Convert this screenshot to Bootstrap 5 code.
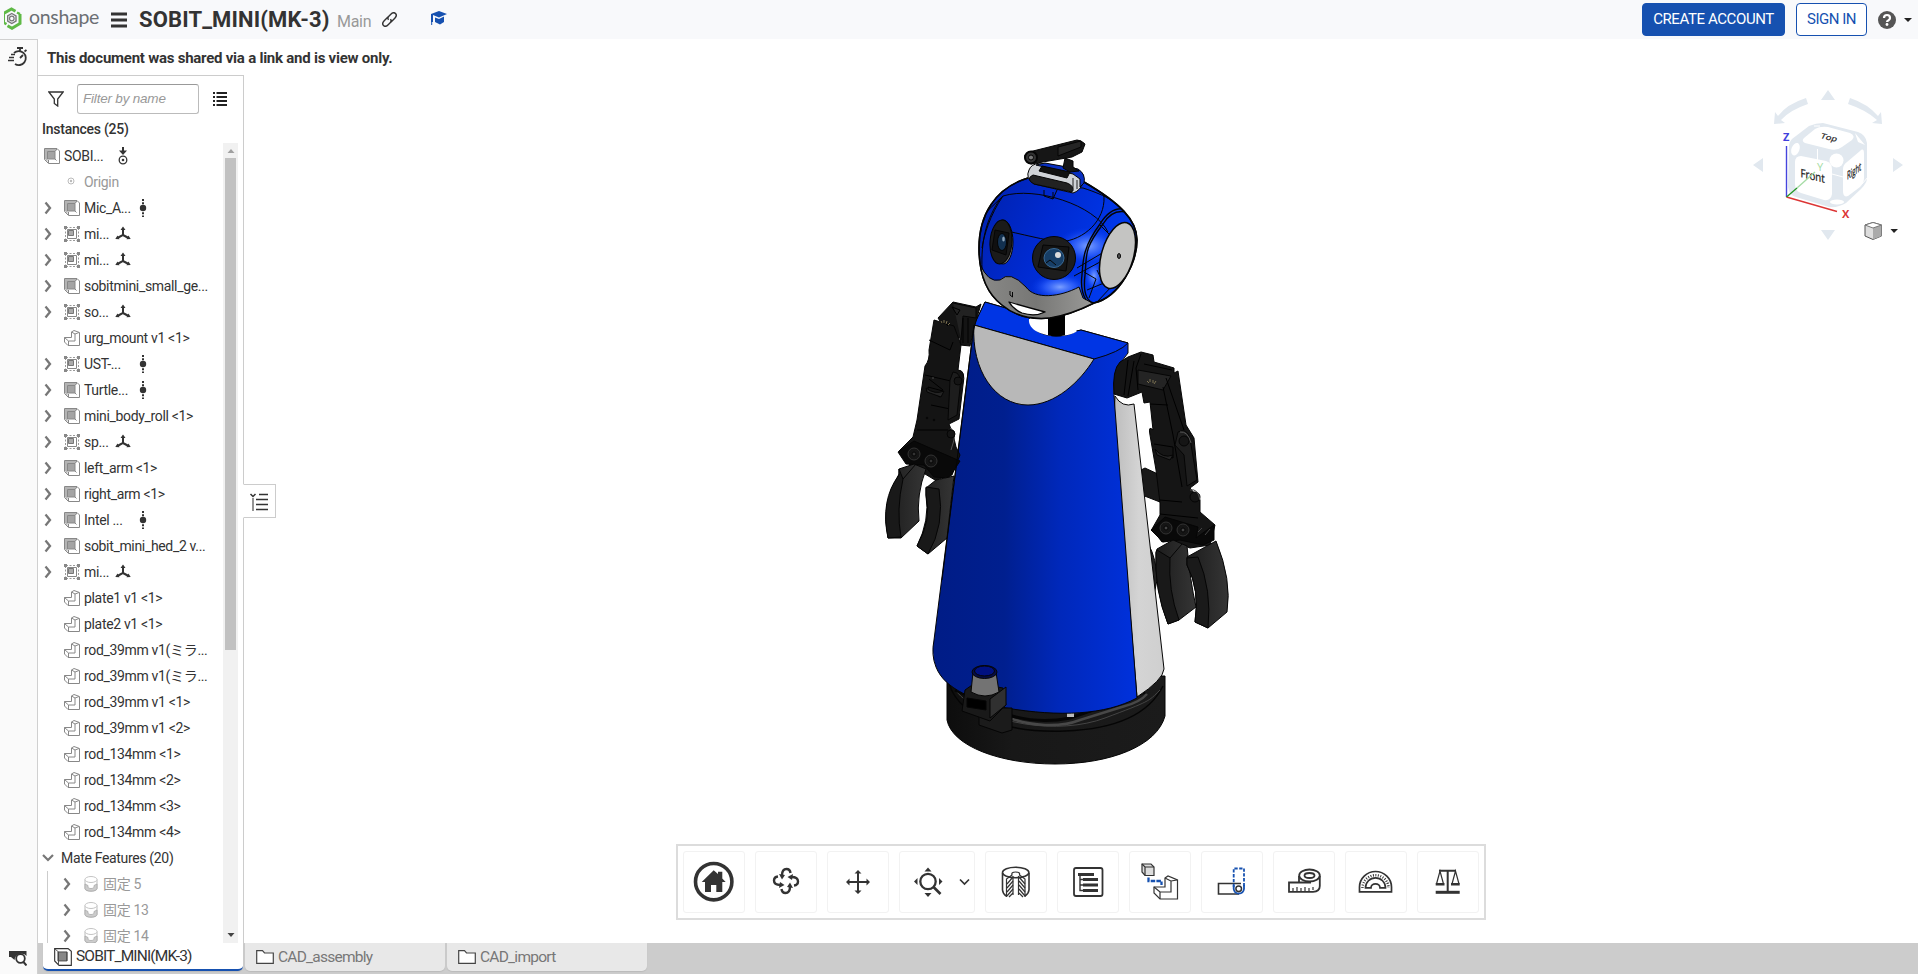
<!DOCTYPE html>
<html lang="en">
<head>
<meta charset="utf-8">
<title>SOBIT_MINI(MK-3)</title>
<link href="https://cdn.jsdelivr.net/npm/bootstrap@5.3.0/dist/css/bootstrap.min.css" rel="stylesheet">
<style>
body{font-family:Roboto,"Noto Sans CJK JP",sans-serif;color:#333;background:#fff;font-size:14px;line-height:1.3}
svg{flex:none;display:block}
.topbar{height:39px;background:#f8f9fb}
.brand-word{font-family:Lato,sans-serif;font-size:19.5px;color:#6b6f73;margin-left:5px;width:72px;line-height:20px;margin-top:-5px;letter-spacing:-.3px}
.doc-title{font-size:22px;font-weight:700;margin-left:12px;width:198px;line-height:26px;letter-spacing:.13px}
.doc-branch{font-size:16px;color:#999;width:45px;padding-top:6px;letter-spacing:-.3px}
.btn-os{height:33px;border-radius:4px;font-size:15px;line-height:31px;padding:0;border:1px solid #1651b0}
.btn-create,.btn-create:hover{width:143px;background:#1651b0;color:#fff;letter-spacing:-.4px}
.btn-signin{width:71px;background:#fff;color:#1651b0;letter-spacing:-.5px}
.rail{width:38px;background:#fafafa;border-right:1px solid #d0d0d0;border-top:1px solid #d0d0d0}
.notice{height:36px;padding:3px 0 0 9px;font-weight:700;font-size:15px;letter-spacing:-.24px}
.side-panel{width:206px;border-top:1px solid #ccc;border-right:1px solid #ccc}
.filter-row{height:44px;padding:7px 15px 6px 10px}
.filter-box{width:122px;height:30px;border:1px solid #bbb;border-top-color:#999;border-radius:3px;font:italic 13.500px "Liberation Sans",sans-serif;padding:0 5px;margin-left:13px;margin-right:14px;letter-spacing:-.2px;color:#333}
.filter-box::placeholder{color:#999;opacity:1}
.inst-head{height:23px;font-size:14px;font-weight:500;padding:0 0 0 4px;letter-spacing:-.25px}
.tree{height:800px}
.tree-row{height:26px;letter-spacing:-.33px;white-space:nowrap}
.tree-row .chev{margin-left:6px;width:8px}
.tree-row .ico{width:16px;margin-left:12px;margin-right:4px}
.w51{width:51px}.w31{width:31px}
.muted-os{color:#999}
.mates{border-left:1px solid #ccc;margin-left:9px}
.sbar{width:15px;background:#f1f1f1;margin-right:5px}
.thumb{height:492px;width:11px;background:#c1c1c1}
.tabbar{height:31px;background:#ccc;padding-left:5px}
.doc-tab{height:28px;width:200px;background:#e8e8e8;color:#777;font-size:15.500px;border-radius:0 0 5px 5px;letter-spacing:-.75px;padding-left:11px;margin-right:2px;box-shadow:0 1px 1px #bbb;white-space:nowrap}
.doc-tab.on{background:#fff;color:#333;border-bottom:2px solid #1651b0;letter-spacing:-.85px;padding-top:1px}
.canvas-area{height:868px}
.panel-toggle{left:-1px;top:409px;width:33px;height:34px;border:1px solid #ccc;border-left-color:#fff;background:#fff}
.robot{left:626px;top:55px}
.cube{left:1506px;top:10px}
.tools{left:432px;top:769px;width:810px;height:76px;border:2px solid #dcdcdc;background:#fff;padding:5px;gap:10px}
.tool{width:62px;height:62px;border:1px solid #f2f2f2;border-radius:3px;background:#fff;padding:0}
.tool svg{margin:-1px}
.tool.wide{width:76px}
</style>
</head>
<body class="overflow-hidden vh-100 d-flex flex-column">
<svg width="0" height="0" class="position-absolute">
<defs>
<symbol id="i-chev" viewBox="0 0 8 14"><path d="M1.500 1.500L6 7L1.500 12.500" fill="none" stroke="#777" stroke-width="2.300"/></symbol>
<symbol id="i-asm" viewBox="0 0 16 16"><path d="M.5.5H13L15.500 3V15.500H4.500L.5 11.500Z" fill="#fff" stroke="#888"/><path d="M1 1H13L11 3.500H3.500V14L1 11Z" fill="#b4b4b4"/><path d="M3.500 3.500H11V11H3.500Z" fill="#a4a4a4" stroke="#888"/><path d="M4.500 12V15M11 3.500L13 1M11 11L12.500 12.500" stroke="#888"/></symbol>
<symbol id="i-grp" viewBox="0 0 16 16"><path d="M2 1.500H14M2 14.500H14M1.500 2V14M14.500 2V14" stroke="#999" stroke-dasharray="2 1.500"/><path d="M0 0h3v3H0zM13 0h3v3h-3zM0 13h3v3H0zM13 13h3v3h-3z" fill="#888"/><path d="M3.500 3.500h9v9h-9z" fill="#fff" stroke="#888"/><path d="M4.500 4.500h5v5h-5z" fill="#aaa" stroke="#777"/></symbol>
<symbol id="i-part" viewBox="0 0 16 16"><path d="M7.500 2L10 .5L15.500 2.500V15.500H4L.5 12V7.500H7.500Z" fill="#fff" stroke="#888"/><path d="M7.500 2L11 4V11H4.500L.5 7.500M4.500 11V15M11 4L15 2.500" fill="none" stroke="#888"/></symbol>
<symbol id="i-dot" viewBox="0 0 16 18"><path d="M8 0V18" stroke="#333" stroke-width="2" stroke-dasharray="2 1.300"/><circle cx="8" cy="9" r="3.200" fill="#333"/></symbol>
<symbol id="i-tri" viewBox="0 0 16 16"><path d="M8 3V9L2.500 12M8 9L13.500 12" fill="none" stroke="#333" stroke-width="2"/><path d="M5.500 4L8 .5L10.500 4ZM.3 13L2.500 9.500L4.500 13.300ZM15.700 13L13.500 9.500L11.500 13.300Z" fill="#333"/></symbol>
<symbol id="i-mate" viewBox="0 0 14 16"><path d="M1 3.500V12.500C1 16 13 16 13 12.500V3.500" fill="#fff" stroke="#bbb"/><path d="M1 8L4 9.500V11C4 13 10 13 10 11V9.500L13 8V12.500C13 16 1 16 1 12.500Z" fill="#ccc" stroke="#aaa" stroke-width=".8"/><ellipse cx="7" cy="3.500" rx="6" ry="3" fill="#fff" stroke="#c4c4c4"/></symbol>
<symbol id="i-folder" viewBox="0 0 18 14"><path d="M.7 13.300V.7H6.500L8.500 3H17.300V13.300Z" fill="#fff" stroke="#444" stroke-width="1.200"/></symbol>
<linearGradient id="gb"><stop offset="0" stop-color="#001c86"/><stop offset=".35" stop-color="#001f8f"/><stop offset=".62" stop-color="#0028ba"/><stop offset="1" stop-color="#0031dc"/></linearGradient>
<linearGradient id="gh" x1="0" x2="1" y1=".2" y2=".6"><stop offset="0" stop-color="#0022b0"/><stop offset=".4" stop-color="#002ad0"/><stop offset="1" stop-color="#003df5"/></linearGradient>
<radialGradient id="gl"><stop offset="0" stop-color="#7ba0ff"/><stop offset=".5" stop-color="#3566ff" stop-opacity=".7"/><stop offset="1" stop-color="#0035ee" stop-opacity="0"/></radialGradient>
<linearGradient id="gc" x1="0" x2="1"><stop offset="0" stop-color="#8a8a88"/><stop offset=".5" stop-color="#777775"/><stop offset="1" stop-color="#9a9a98"/></linearGradient>
<linearGradient id="gw"><stop offset="0" stop-color="#bdbdbd"/><stop offset=".5" stop-color="#d4d4d4"/><stop offset="1" stop-color="#cfcfcf"/></linearGradient>
<linearGradient id="gk"><stop offset="0" stop-color="#0d0d0d"/><stop offset=".3" stop-color="#181818"/><stop offset="1" stop-color="#1b1b1b"/></linearGradient>
<linearGradient id="gf"><stop offset="0" stop-color="#1c1c1c"/><stop offset="1" stop-color="#353535"/></linearGradient>
<clipPath id="head-clip"><path d="M1028 178C995 188 979 215 979 248C979 270 985 292 1002 305C1015 316 1030 320 1050 318Q1070 315 1094 303C1120 297 1137 262 1137 240C1137 220 1120 203 1084 182Z"/></clipPath>
</defs></svg>

<header class="topbar d-flex align-items-center position-relative">
  <svg width="20" height="23" viewBox="0 0 20 23" class="ms-1" style="margin-top:-2px"><g transform="translate(-2.500 .5)" fill="none"><path d="M2 15V6L10 1.500L14 3.700M18.500 6.500V16L10.500 20.800L6 18.300" stroke="#5fb946" stroke-width="3"/><path d="M2 15L5 16.700M18.500 6.500L15.500 5" stroke="#5fb946" stroke-width="2.500"/><path d="M10.300 6L14.500 8.300V13.500L10.300 16L6.200 13.500V8.300Z" stroke="#777" stroke-width="1.400"/><circle cx="10.300" cy="11" r="2.300" stroke="#777" stroke-width="1.200"/></g></svg>
  <span class="brand-word">onshape</span>
  <svg width="16" height="16" viewBox="0 0 16 16" style="margin-left:10px"><path d="M0 2H16M0 8H16M0 14H16" stroke="#333" stroke-width="3"/></svg>
  <span class="doc-title text-nowrap">SOBIT_MINI(MK-3)</span>
  <span class="doc-branch">Main</span>
  <svg width="15" height="15" viewBox="0 0 16 16"><g fill="none" stroke="#333" stroke-width="1.500" transform="rotate(-45 8 8)"><path d="M9 5H3Q-1 5 -1 8T3 11H6Q8.500 11 9 8.500M7 11H13Q17 11 17 8T13 5H10Q7.500 5 7 7.500"/></g></svg>
  <svg width="16" height="15" viewBox="0 0 16 15" style="margin-left:34px;margin-top:-2px"><path d="M8 0L16 3L8 6.500L2 4V11H0V3Z" fill="#1651b0"/><path d="M4 6.500L8 8L13 5.500V11L9 13.500L4 11Z" fill="#1651b0"/><path d="M.7 10v4" stroke="#1651b0"/></svg>
  <div class="d-flex align-items-center ms-auto h-100">
    <button class="btn btn-os btn-create">CREATE ACCOUNT</button>
    <button class="btn btn-os btn-signin" style="margin-left:11px">SIGN IN</button>
    <svg width="18" height="18" viewBox="0 0 18 18" style="margin-left:11px;margin-top:1px"><circle cx="9" cy="9" r="9" fill="#555"/><path d="M6 7Q6 4 9 4T12 7Q12 8.300 10.500 9.200Q9 10 9 11" fill="none" stroke="#fff" stroke-width="2.200"/><circle cx="9" cy="13.500" r="1.400" fill="#fff"/></svg>
    <svg width="8" height="4" viewBox="0 0 8 4" style="margin:1px 6px 0 8px"><path d="M0 0H8L4 4Z" fill="#222"/></svg>
  </div>
</header>

<div class="d-flex flex-grow-1">
  <aside class="rail d-flex flex-column justify-content-between align-items-center">
    <svg width="20" height="20" viewBox="0 0 20 20" style="margin:7px 2px 0 0"><g fill="none" stroke="#333" stroke-width="1.800"><path d="M6 6A7 7 0 1 1 7 17M9 1H15M12 1V4M16.500 4.500L18.500 3M12 11L15 8"/><path d="M3 7.500H7M1 10.500H6M0 13.500H6" stroke-width="1.500"/></g></svg>
    <svg width="18" height="15" viewBox="0 0 18 15" style="margin:0 2px 8px 0"><path d="M0 0H17.500V5Q15 2 11 3Q6 4 5.500 9L2 6H0Z" fill="#333"/><circle cx="11.500" cy="7.500" r="4.300" fill="#fff" stroke="#333" stroke-width="1.800"/><path d="M14.500 11L17.500 14.500" stroke="#333" stroke-width="2"/></svg>
  </aside>
  <div class="d-flex flex-column flex-grow-1">
    <div class="notice d-flex align-items-center">This document was shared via a link and is view only.</div>
    <div class="d-flex">
      <section class="side-panel flex-shrink-0">
        <div class="filter-row d-flex align-items-center">
          <svg width="16" height="16" viewBox="0 0 16 16"><path d="M.8 1H15.200L9.700 8V15L6.300 12.500V8Z" fill="none" stroke="#333" stroke-width="1.300"/></svg>
          <input class="filter-box" placeholder="Filter by name">
          <svg width="14" height="14" viewBox="0 0 14 14"><path d="M0 1H2M3.500 1H14M0 5H2M3.500 5H14M0 9H2M3.500 9H14M0 13H2M3.500 13H14" stroke="#222" stroke-width="2"/></svg>
        </div>
        <div class="inst-head">Instances (25)</div>
        <div class="tree d-flex">
          <div class="flex-grow-1 overflow-hidden" id="rows">
            <div class="tree-row d-flex align-items-center"><svg class="ico" height="16" style="margin-left:6px"><use href="#i-asm"/></svg><span class="w51">SOBI...</span><svg width="16" height="18" viewBox="0 0 16 18"><path d="M8 0V4" stroke="#333" stroke-width="2"/><path d="M4 3.500H12L8 8Z" fill="#333"/><circle cx="8" cy="13" r="3.800" fill="#fff" stroke="#333" stroke-width="1.300"/><circle cx="8" cy="13" r="1.300" fill="#333"/></svg></div>
            <div class="tree-row d-flex align-items-center muted-os"><svg width="8" height="8" viewBox="0 0 8 8" style="margin:-2px 9px 0 29px"><circle cx="4" cy="4" r="3" fill="none" stroke="#bbb"/><circle cx="4" cy="4" r="1.200" fill="#bbb"/></svg>Origin</div>
          </div>
          <div class="sbar d-flex flex-column align-items-center flex-shrink-0">
            <svg width="8" height="15" viewBox="0 0 8 15"><path d="M.5 10H7.500L4 6Z" fill="#a0a0a0"/></svg>
            <div class="thumb"></div>
            <svg width="8" height="15" viewBox="0 0 8 15" class="mt-auto"><path d="M.5 5H7.500L4 9Z" fill="#444"/></svg>
          </div>
        </div>
      </section>
      <main class="canvas-area flex-grow-1 position-relative">
        <div class="panel-toggle position-absolute"><svg width="31" height="32" viewBox="0 0 31 32"><path d="M15 9.500H24M12 14.500H24M12 19.500H24M12 24.500H24" stroke="#333" stroke-width="1.300"/><path d="M9 13V26" stroke="#888" stroke-width="1.800"/><path d="M6.500 9L9 11.500L11.500 9" fill="none" stroke="#333" stroke-width="1.500"/></svg></div>

        <svg class="robot position-absolute" width="380" height="650" viewBox="870 130 380 650" stroke="#050505" stroke-linejoin="round">
          <!-- wheeled base -->
          <path d="M947 675V720C952 746 1000 764 1055 764S1157 746 1165 716V676Z" fill="url(#gk)"/>
          <path d="M948 678C954 718 1010 733 1065 731S1150 712 1163 686" fill="none" stroke-width="1.500"/>
          <path d="M955 690C985 726 1060 735 1105 718S1148 702 1160 690" fill="none" stroke="#444"/>
          <path d="M1010 718C1030 726 1060 728 1080 720L1125 706Q1140 702 1147 694" fill="none" stroke="#484848" stroke-width="2.500"/>
          <path d="M955 690L1012 716Q1040 724 1070 718L1145 692" fill="none" stroke-width="3"/>
          <rect x="1067" y="712" width="7" height="5" fill="#bbb" stroke="none"/>
          <!-- forearm pieces behind the robe -->
          <path d="M1141 470L1145 468L1160 475V502L1142 495Z" fill="#191919"/>
          <path d="M1148 543Q1157 560 1157 580L1153 600Z" fill="#222"/>
          <path d="M1115 396Q1122 408 1134 404L1164 669Q1163 680 1137 697L1114 420Z" fill="url(#gw)"/>
          <!-- robe -->
          <path d="M974 325L985 302L1020 312Q1030 320 1029 325C1035 340 1066 337 1075 332L1081 330L1128 343V353Q1112 370 1114 396L1137 698C1105 715 1060 717 1006 708C975 700 945 690 936 667Q931 655 934 640Z" fill="url(#gb)"/>
          <path d="M974 325L985 302L1023 313L1031 320C1030 337 1064 340 1076 331L1081 330L1128 343Q1120 352 1094 359Z" fill="#0035e4"/>
          <path d="M1029 319C1027 337 1066 340 1077 331L1066 322V312L1048 316L1031 319Z" fill="#fff" stroke="none"/><path d="M1048 314H1065V335Q1056 338 1048 335Z" fill="#000" stroke="none"/>
          <path d="M974 325L1094 359C1080 382 1055 405 1028 405C995 405 971 370 974 325Z" fill="#b8b8b8"/>
          <!-- left arm -->
          <g fill="#141414">
            <path d="M938 318L953 302L976 307L981 304L974 328L970 346L960 345V338L949 335Z"/>
            <path d="M953 303L976 308V318L963 316L961 340" fill="#222"/>
            <path d="M934 320L954 326L961 345L958 370Q966 370 963 385L959 419L949 424L953 434L956 447L960 455L952 475L935 480L910 465L899 451L913 437L917 420L925 366Q930 360 929 350Z"/>
            <path d="M929 340L950 350L953 342M925 375L955 382M929 379L943 390M928 387L943 391L940 397L928 390ZM917 430L948 430M931 405L955 410" fill="none" stroke="#000"/>
            <path d="M926 388Q935 395 944 391L941 397L927 392Z" fill="#242424"/>
            <path d="M953 372Q962 372 960 388L957 415L948 420L950 380Z" fill="#1d1d1d"/>
            <path d="M950 428Q956 430 954 440L951 450" stroke="#555" fill="none"/>
            <circle cx="958" cy="381" r="4"/><circle cx="951" cy="434" r="4"/>
            <path d="M952 307L960 310L957 315ZM963 318V343M968 318V343M944 322L948 326" fill="none" stroke="#000"/>
            <path d="M898 452L914 441L960 461L949 478L934 477L924 465L906 464Z" fill="#090909"/>
            <circle cx="914" cy="454" r="6" fill="#141414" stroke="#333"/><circle cx="914" cy="454" r="2" fill="#333"/><circle cx="931" cy="461" r="6" fill="#141414" stroke="#333"/><circle cx="931" cy="461" r="2" fill="#333"/>
            <path d="M941 321l1 2m2-3v3m3-2l-1 3m4-1l-2 2" stroke="#7d7252" fill="none"/>
            <circle cx="933" cy="378" r=".8" fill="#555" stroke="none"/><circle cx="927" cy="418" r=".8"/><circle cx="934" cy="420" r=".8"/>
          </g>
          <path d="M899 469L914 464L926 469Q916 495 919 521L901 538H888Q880 505 899 474Z" fill="url(#gf)"/>
          <path d="M899 469L903 479Q896 510 901 537L888 538Q880 500 899 475Z" fill="#191919"/><path d="M903 479L916 464" fill="none"/>
          <path d="M926 488L936 480L954 476L947 538L928 554L917 546Q930 520 926 495Z" fill="url(#gf)"/>
          <path d="M926 487L939 489Q945 525 928 554L917 546Q932 520 926 495Z" fill="#191919"/>
          <path d="M974 325L942 580" fill="none"/>
          <!-- right arm -->
          <g fill="#151515">
            <path d="M1128 357L1141 352L1153 355L1154 362L1174 368V373L1178 371L1186 425L1194 438L1198 482L1190 488L1200 500V512L1215 525L1210 545L1190 548L1170 540L1162 542L1152 529L1160 515V503L1156 470L1150 435Q1148 425 1153 430L1150 402L1144 403L1142 392L1127 398L1114 394Q1112 370 1120 362Z"/>
            <path d="M1138 370L1171 376L1163 390L1138 384Z" fill="#242424"/>
            <path d="M1128 360L1124 395M1134 361L1128 396M1141 354L1136 368L1138 390M1144 364L1172 370M1166 378L1184 430M1163 387L1173 435M1150 404L1168 405M1154 444L1173 447L1173 458L1157 454M1160 500L1182 502M1173 435L1182 487M1160 514L1198 518" fill="none" stroke="#000"/>
            <path d="M1155 449Q1163 459 1173 455L1170 460L1157 455Z" fill="#242424"/>
            <path d="M1178 432Q1187 427 1190 439L1197 480L1187 486L1184 455L1175 445Z" fill="#1e1e1e"/><circle cx="1184" cy="441" r="5"/><circle cx="1195" cy="497" r="5"/>
            <path d="M1180 432Q1188 431 1191 443M1190 490Q1198 488 1200 500" stroke="#555" fill="none"/>
            <path d="M1151 530L1165 517L1198 527L1196 538L1214 525V540L1203 545L1180 540L1163 542Z" fill="#090909"/>
            <circle cx="1166" cy="528" r="6" stroke="#333"/><circle cx="1166" cy="528" r="2" fill="#444"/><circle cx="1183" cy="530" r="6" stroke="#333"/><circle cx="1183" cy="530" r="2" fill="#444"/>
            <path d="M1147 381l2 2m1-4v3m3-2v3m3-2l-2 3" stroke="#7d7252" fill="none"/>
            <path d="M1198 532L1202 528M1205 535L1210 529" stroke="#444" fill="none"/>
          </g>
          <path d="M1157 549L1173 540L1187 546Q1190 580 1196 607L1179 620L1168 624Q1155 590 1156 553Z" fill="url(#gf)"/>
          <path d="M1157 550L1170 558Q1168 590 1179 620L1168 624Q1154 590 1156 552Z" fill="#191919"/><path d="M1170 558L1182 544" fill="none"/>
          <path d="M1187 557L1216 541Q1232 580 1227 612L1208 628L1195 622Q1200 590 1187 565Z" fill="url(#gf)"/>
          <path d="M1187 558L1198 557Q1212 590 1208 628L1195 622Q1200 590 1187 565Z" fill="#1a1a1a"/>
          <!-- head -->
          <path d="M1028 178C995 188 979 215 979 248C979 270 985 292 1002 305C1015 316 1030 320 1050 318Q1070 315 1094 303C1120 297 1137 262 1137 240C1137 220 1120 203 1084 182Z" fill="url(#gh)" stroke-width="1.500"/>
          <g clip-path="url(#head-clip)">
            <ellipse cx="1088" cy="246" rx="32" ry="19" fill="url(#gl)" stroke="none"/><ellipse cx="1060" cy="287" rx="30" ry="14" fill="url(#gl)" stroke="none"/><ellipse cx="1094" cy="276" rx="10" ry="16" fill="url(#gl)" stroke="none"/>
            <path d="M978 268C985 292 1000 308 1016 314C1035 322 1062 320 1094 304L1083 298L1079 287C1060 297 1035 300 1026 287Q1010 270 1000 280Q988 283 980 264Z" fill="url(#gc)"/>
            <g fill="none">
              <path d="M980 218L1003 196C1035 186 1095 205 1108 232M1003 196C990 215 984 235 982 248M1000 199C986 220 981 240 982 270M994 228C1025 235 1045 240 1060 242C1085 240 1105 220 1104 197L1098 183M1046 184Q1060 187 1083 188C1105 195 1125 205 1131 220"/>
              <path d="M1136 216Q1115 204 1103 224C1083 250 1087 255 1085 275Q1082 300 1094 303M1130 211Q1113 203 1100 224C1083 247 1083 260 1082 275Q1080 290 1086 300" stroke-width="1.400"/>
              <path d="M1100 225L1110 235M1077 268L1104 252M1074 276L1100 262M1087 290L1104 283M1097 302L1112 286M1084 272L1096 279L1089 298M1103 283L1097 270"/>
              <path d="M1044 190V196L1053 199L1057 190M1053 199V192"/>
            </g>
          </g>
          <path d="M1028 178C995 188 979 215 979 248C979 270 985 292 1002 305C1015 316 1030 320 1050 318Q1070 315 1094 303C1120 297 1137 262 1137 240C1137 220 1120 203 1084 182" fill="none" stroke-width="1.500"/>
          <path d="M1009 302Q1026 307 1045 312Q1035 317 1022 313Q1013 309 1009 302Z" fill="#fff" stroke-width="1.300"/><path d="M1010 291V295L1012.500 297V292" fill="none"/>
          <ellipse cx="1117.500" cy="255.500" rx="16" ry="34" transform="rotate(16 1117.500 255.500)" fill="#c4c4c2" stroke-width="1.500"/><ellipse cx="1119" cy="256" rx="1.500" ry="2.500" fill="#555"/>
          <ellipse cx="1003" cy="242" rx="10" ry="22" fill="#777"/><ellipse cx="1001" cy="242" rx="11" ry="22" transform="rotate(4 1001 242)" fill="#1b1b1b"/>
          <path d="M995 230L1009 233L1006 255L992 250Z" fill="#101010"/><ellipse cx="1002" cy="242" rx="4.500" ry="8.500" fill="#12304f"/><ellipse cx="1003.500" cy="239" rx="1.300" ry="2.500" fill="#8fa5ba" stroke="none"/>
          <circle cx="1054" cy="258" r="21.500" fill="#1d1d1d"/><path d="M1043 245L1069 247L1066 271L1038 267Z" fill="#151515"/><ellipse cx="1054" cy="258" rx="10" ry="9.500" fill="#173e66" stroke="#3a6a95"/><circle cx="1058" cy="255" r="3" fill="#dcdcdc" stroke="none"/><path d="M1046 263L1050 260L1056 265" fill="none"/>
          <!-- camera and microphone -->
          <path d="M1029 170Q1031 164 1040 163L1076 169Q1086 173 1083 183Q1080 191 1073 193L1034 184Q1025 178 1029 170Z" fill="#d0d3d7"/>
          <path d="M1036 165L1045 163L1078 169Q1086 174 1084 183L1080 187L1080 179L1073 174Z" fill="#082fc0"/>
          <path d="M1033 175L1067 183Q1075 186 1072 192L1034 184Q1025 179 1033 175Z" fill="#222"/><path d="M1042 166L1070 172L1067 178L1039 171Z" fill="#111"/><path d="M1073 178V191M1077 180V189" stroke="#222"/>
          <path d="M1065 158L1073 161V167L1079 171L1070 172L1063 168Z" fill="#151515"/>
          <path d="M1029 152L1077 140Q1081 140 1085 144L1082 152L1072 157L1031 164Q1023 160 1025 155Z" fill="#161616"/>
          <path d="M1058 147L1081 141V147L1058 156Z" fill="#252525"/><circle cx="1031" cy="157.500" r="6" fill="#333" stroke-width="2"/><circle cx="1031" cy="157.500" r="2.500" fill="#777"/>
          <!-- laser scanner -->
          <path d="M979 725V716L1002 708H1012V730L1002 733Z" fill="#1b1b1b"/>
          <path d="M962 711L965 690L975 683L1003 688L1006 705L990 721Z" fill="#191919"/><path d="M990 699L1006 687V705L990 718Z" fill="#303030"/><path d="M967 698L986 701V710L967 707Z" fill="#000"/>
          <path d="M973 672L971 692Q985 700 999 692L996 672Z" fill="#737373"/><ellipse cx="984.500" cy="672" rx="12.500" ry="6.500" fill="#060d45"/><ellipse cx="984.500" cy="671" rx="10" ry="5" fill="#001080"/>
        </svg>

        <svg class="cube position-absolute" width="165" height="160" viewBox="1750 85 165 160" font-family="Open Sans, sans-serif">
          <g fill="#e1e8ef"><path d="M1821 100H1835L1828 90ZM1821 230H1835L1828 240ZM1763 158V172L1753 165ZM1893 158V172L1903 165Z"/>
          <path d="M1806 98L1808 104Q1790 110 1781 120L1785 123L1774 124L1775 112L1778 116Q1787 104 1806 98ZM1850 98L1848 104Q1866 110 1877 120L1872 123L1882 124L1881 112L1878 116Q1868 104 1850 98Z"/></g>
          <path d="M1789 147Q1789 142 1792 139L1809 126Q1816 123 1823 123L1858 132Q1866 135 1867 143V178Q1867 183 1861 189L1846 203Q1838 208 1829 207L1796 197Q1789 195 1788 187Z" fill="#e1e8ef"/>
          <g fill="#fff"><path d="M1804 138L1815 129Q1820 126 1828 127L1850 133Q1856 136 1852 140L1842 147Q1837 151 1829 149L1805 143Q1801 141 1804 138Z"/><path d="M1801 156L1826 161Q1832 163 1832 169V194Q1831 201 1824 200L1801 193Q1795 191 1795 184V162Q1795 156 1801 156Z"/><path d="M1847 162L1860 151Q1864 147 1864 154V178Q1864 183 1860 187L1848 196Q1843 198 1843 191V169Q1843 165 1847 162Z"/><ellipse cx="1795.500" cy="149" rx="4" ry="6.500" transform="rotate(20 1795 149)"/><circle cx="1836.500" cy="160.500" r="7"/><ellipse cx="1837" cy="202" rx="7" ry="2.500"/><path d="M1855 133L1865 145L1858 142Z"/></g>
          <path d="M1817.500 149V160M1832 174L1843 177M1814 126L1820 126M1862 184L1868 177" stroke="#fff"/>
          <g fill="#222" stroke="#222" stroke-width=".3"><text font-size="11.500" transform="matrix(.84 .2 0 1 1800.500 177)">Front</text><text font-size="9.500" transform="matrix(.95 .22 -.35 .72 1820 138)">Top</text><text font-size="11.500" transform="matrix(.52 -.36 0 1 1847 180)">Right</text></g>
          <path d="M1786.500 146V197" stroke="#4545dd" stroke-width="1.400"/><path d="M1786.500 197L1837 211.500" stroke="#dc3535" stroke-width="1.400"/><path d="M1797 188L1815 172" stroke="#a5dca5" stroke-width="1.300"/><path d="M1786.500 197L1797 188" stroke="#259625" stroke-width="1.300"/>
          <g font-size="11" font-weight="700"><text x="1783" y="141" fill="#4040dd">Z</text><text x="1842" y="218" fill="#dc3535">X</text><text x="1817" y="171" fill="#a5dca5" font-weight="400">Y</text></g>
          <path d="M1865 225L1873 222.500L1881.500 225V236L1873 239.500L1865 236Z" fill="#ddd" stroke="#555"/><path d="M1873 228L1881.500 225V236L1873 239.500Z" fill="#aaa"/><path d="M1865 225L1873 228L1881.500 225L1873 222.500Z" fill="#fff" stroke="#777"/><path d="M1890.500 229H1898L1894 233Z" fill="#222"/>
        </svg>

        <div class="tools position-absolute d-flex">
          <button class="tool"><svg width="62" height="62"><circle cx="30.700" cy="30.700" r="18.200" fill="none" stroke="#333" stroke-width="3.600"/><path d="M18.700 31L30.700 19.300L35 23V20.700H39.300V27.500L42.700 31H39.300V41H33.300V34H28V41H22V31Z" fill="#333"/></svg></button>
          <button class="tool"><svg width="62" height="62"><g id="lobe"><path d="M27 24.500Q27 18 31.500 18Q35 18 35.500 22" fill="none" stroke="#333" stroke-width="2.400"/><path d="M24 23L30 24L27 28.500Z" fill="#333"/></g><use href="#lobe" transform="rotate(90 31 30)"/><use href="#lobe" transform="rotate(180 31 30)"/><use href="#lobe" transform="rotate(270 31 30)"/></svg></button>
          <button class="tool"><svg width="62" height="62"><path d="M21 31H41M31 21V41" stroke="#333" stroke-width="2"/><path d="M31 19L34.500 22.500H27.500ZM31 43L34.500 39.500H27.500ZM19 31L22.500 27.500V34.500ZM43 31L39.500 27.500V34.500Z" fill="#333"/></svg></button>
          <button class="tool wide"><svg width="76" height="62"><circle cx="29" cy="30.500" r="7.700" fill="none" stroke="#333" stroke-width="2.300"/><path d="M34.500 36L41.500 43" stroke="#333" stroke-width="2.600"/><path d="M29 16.500L32.500 20.500H25.500ZM29 46L32.500 42H25.500ZM15 30.500L18.500 27V34ZM43.500 30.500L40 27V34Z" fill="#333"/><path d="M61 28.500L65.500 33L70 28.500" fill="none" stroke="#333" stroke-width="1.700"/></svg></button>
          <button class="tool"><svg width="62" height="62"><g fill="none" stroke="#333" stroke-width="1.600"><path d="M17.500 22V39Q18 43 21 45M44 22V39Q43.500 43 40 45"/><ellipse cx="30.700" cy="21.500" rx="13.200" ry="5.200"/><path d="M21.500 46V28L27 24Q26 21 30.700 21T34.500 24L40 28V46M28 25V44M33.500 25V44" stroke-width="1.200"/><path d="M22 33L28 26M22 37L28 30M22 41L28 34M22 45L28 38M24 46L28 42M40 33L34 26M40 37L34 30M40 41L34 34M40 45L34 38M38 46L34 42" stroke-width="1.200"/></g></svg></button>
          <button class="tool"><svg width="62" height="62"><rect x="17" y="17" width="28.500" height="28" rx="2" fill="none" stroke="#333" stroke-width="1.800"/><path d="M21 23.500H37M26 28.500H41M26 34H41M26 39.500H41" stroke="#333" stroke-width="3"/><path d="M23 24V39.500H26M23 28.500H26M23 34H26" fill="none" stroke="#333" stroke-width="1.400"/></svg></button>
          <button class="tool"><svg width="62" height="62"><g stroke="#333" stroke-width="1.200"><path d="M13 13H22L25 16V24.500H16L13 21Z" fill="#ddd"/><path d="M16 16V24.500M13 13L16 16H25" fill="none"/><path d="M36 27L39 25L48.500 29V48H31L25 42V36H36Z" fill="#fff"/><path d="M36 27L42 30V41H31L25 36M31 41V48M42 30L48 29" fill="none"/></g><path d="M19.500 26.500V30H32.500V34" fill="none" stroke="#1651b0" stroke-width="2.300" stroke-dasharray="4.500 1.200"/></svg></button>
          <button class="tool"><svg width="62" height="62"><path d="M40 32.500H17.500V43H38" fill="#fff" stroke="#333" stroke-width="1.600"/><path d="M32.700 36V17.500H43V36" fill="none" stroke="#1651b0" stroke-width="1.800" stroke-dasharray="3.300 1.500"/><path d="M32.700 34V38A5.200 5.200 0 0 0 43 38V34" fill="none" stroke="#1651b0" stroke-width="1.800"/><circle cx="37.700" cy="37.700" r="2.800" fill="#fff" stroke="#333" stroke-width="1.500"/></svg></button>
          <button class="tool"><svg width="62" height="62"><g fill="none" stroke="#333" stroke-width="1.800"><ellipse cx="36.500" cy="24.500" rx="10.300" ry="6"/><ellipse cx="36.500" cy="24.500" rx="5" ry="2.500"/><path d="M26 25V31.500H16V40.800H40Q46.800 40.500 46.800 35V25M26 31.500H38"/><path d="M20 40V37M24 40V36M28 40V37M32 40V36M36 40V37M40 39V36" stroke-width="1.200"/></g></svg></button>
          <button class="tool"><svg width="62" height="62"><g fill="none" stroke="#333" stroke-width="1.700"><path d="M14.500 40.800V36A16 15.500 0 0 1 46.500 36V40.800Z"/><path d="M20.500 36.800A10 10 0 0 1 40.500 36.800H35A4.500 4 0 0 0 26 36.800Z"/><path d="M17.500 37A13 12.800 0 0 1 43.500 37" stroke-width="2.500" stroke-dasharray="1 1.500"/></g></svg></button>
          <button class="tool"><svg width="62" height="62"><path d="M22 19.700H39M30.700 19V40" stroke="#333" stroke-width="2"/><path d="M18.700 41.300H42.700" stroke="#333" stroke-width="3"/><path d="M19.500 33L23 20L26.500 33M35 33L38.500 20L42 33" fill="none" stroke="#333" stroke-width="1.200"/><path d="M18.700 32H27.500V34.500H18.700ZM34 32H42.700V34.500H34Z" fill="#333"/></svg></button>
        </div>
      </main>
    </div>
    <nav class="tabbar d-flex">
      <div class="doc-tab on d-flex align-items-center"><svg width="18" height="18" viewBox="0 0 16 16" class="me-1"><path d="M.6.6H12.500L15.400 3V15.400H4.500L.6 11.500Z" fill="#fff" stroke="#333"/><path d="M3.500 3.500H11.500V11.500H3.500Z" fill="#888" stroke="#444" stroke-width=".8"/><path d="M1 1L4 3.500V15M11.500 11.500V3.500" stroke="#444" stroke-width=".8" fill="none"/></svg><span>SOBIT_MINI(MK-3)</span></div>
      <div class="doc-tab d-flex align-items-center"><svg width="18" height="16" class="me-1"><use href="#i-folder"/></svg>CAD_assembly</div>
      <div class="doc-tab d-flex align-items-center"><svg width="18" height="16" class="me-1"><use href="#i-folder"/></svg>CAD_import</div>
    </nav>
  </div>
</div>
<script>
// name, icon, expandable, status icon
const items = [
  ["Mic_A...","asm",1,"dot"],["mi...","grp",1,"tri"],["mi...","grp",1,"tri"],["sobitmini_small_ge...","asm",1],
  ["so...","grp",1,"tri"],["urg_mount v1 <1>","part",0],["UST-...","grp",1,"dot"],["Turtle...","asm",1,"dot"],
  ["mini_body_roll <1>","asm",1],["sp...","grp",1,"tri"],["left_arm <1>","asm",1],["right_arm <1>","asm",1],
  ["Intel ...","asm",1,"dot"],["sobit_mini_hed_2 v...","asm",1],["mi...","grp",1,"tri"],["plate1 v1 <1>","part",0],
  ["plate2 v1 <1>","part",0],["rod_39mm v1(ミラ...","part",0],["rod_39mm v1(ミラ...","part",0],["rod_39mm v1 <1>","part",0],
  ["rod_39mm v1 <2>","part",0],["rod_134mm <1>","part",0],["rod_134mm <2>","part",0],["rod_134mm <3>","part",0],["rod_134mm <4>","part",0]
];
const esc = s => s.replace(/</g, "&lt;").replace(/>/g, "&gt;");
let html = items.map(([n, ic, open, st]) =>
  `<div class="tree-row d-flex align-items-center"><svg class="chev" height="14">${open ? '<use href="#i-chev"/>' : ''}</svg>` +
  `<svg class="ico" height="16"><use href="#i-${ic}"/></svg><span class="${st === "dot" ? "w51" : st ? "w31" : ""}">${esc(n)}</span>` +
  (st ? `<svg width="16" height="${st === "dot" ? 18 : 16}"><use href="#i-${st}"/></svg>` : "") + `</div>`).join("");
html += `<div class="tree-row d-flex align-items-center"><svg width="12" height="8" viewBox="0 0 12 8" style="margin:0 7px 0 4px"><path d="M1 1L6 6L11 1" fill="none" stroke="#777" stroke-width="2.200"/></svg>Mate Features (20)</div><div class="mates">`;
html += ["固定 5", "固定 13", "固定 14"].map(n =>
  `<div class="tree-row d-flex align-items-center muted-os"><svg width="8" height="14" style="margin:0 13px 0 15px"><use href="#i-chev"/></svg><svg width="14" height="16" style="margin-right:5px"><use href="#i-mate"/></svg>${n}</div>`).join("") + "</div>";
document.getElementById("rows").insertAdjacentHTML("beforeend", html);
</script>
<script src="https://cdn.jsdelivr.net/npm/bootstrap@5.3.0/dist/js/bootstrap.bundle.min.js"></script>
</body>
</html>
